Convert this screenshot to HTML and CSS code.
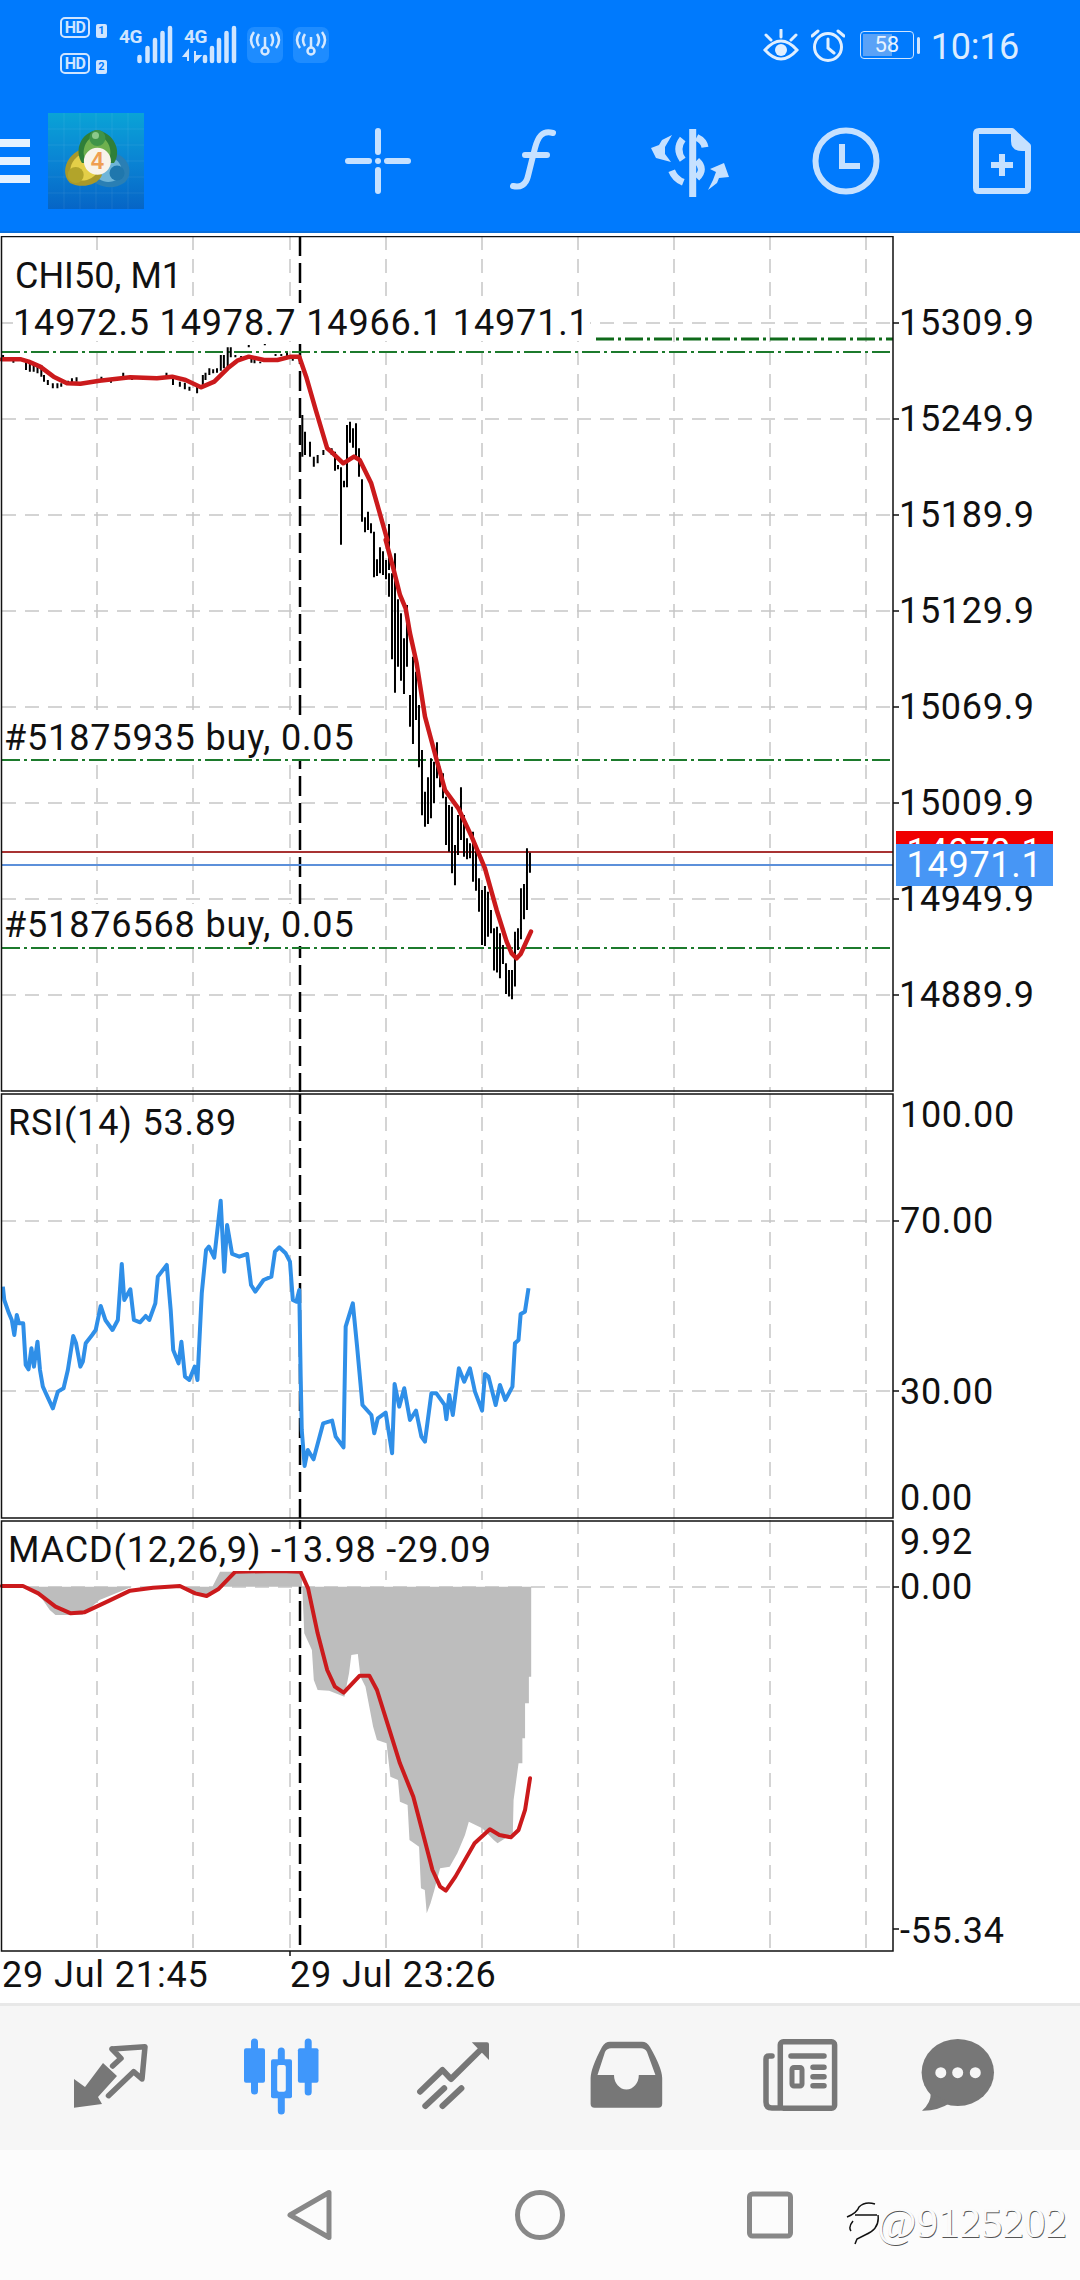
FILE: index.html
```html
<!DOCTYPE html>
<html lang="en">
<head>
<meta charset="utf-8">
<title>CHI50, M1</title>
<link rel="stylesheet" href="styles.css">
</head>
<body>
<header class="header">
  <div class="status">
    <div class="hd-col">
      <div class="hd-row"><span class="hd">HD</span><span class="sim">1</span></div>
      <div class="hd-row"><span class="hd">HD</span><span class="sim">2</span></div>
    </div>
    <svg class="signal" width="118" height="48" viewBox="119 21 118 48">
      <text class="net" x="119" y="43">4G</text>
      <text class="net" x="184" y="43">4G</text>
      <path class="sig-bars" d="M139.5 61V57M147.500 61V48M155 61V40M162.500 61V33M170 61V28M205 61V57M212 61V48M219 61V40M226.500 61V33M234 61V28"/>
      <path class="sig-arrows" d="M188 61V51l-4 5h4M195 51V61l5-5h-5"/>
    </svg>
    <svg class="hot" width="36" height="36" viewBox="0 0 36 36">
      <rect class="hot-bg" width="36" height="36" rx="7"/>
      <circle class="hot-line" cx="18" cy="24" r="3.500"/>
      <path class="hot-line" d="M18 20V10M12 7q-4 6 0 12M24 7q4 6 0 12M7 5q-6 8 0 16M29 5q6 8 0 16"/>
    </svg>
    <svg class="hot hot-2" width="36" height="36" viewBox="0 0 36 36">
      <rect class="hot-bg" width="36" height="36" rx="7"/>
      <circle class="hot-line" cx="18" cy="24" r="3.500"/>
      <path class="hot-line" d="M18 20V10M12 7q-4 6 0 12M24 7q4 6 0 12M7 5q-6 8 0 16M29 5q6 8 0 16"/>
    </svg>
    <div class="status-right">
      <svg width="36" height="33" viewBox="0 0 36 33">
        <path class="st-line" d="M2 21q16-18 32 0q-16 18-32 0z"/>
        <circle class="st-fill" cx="18" cy="21" r="6"/>
        <path class="st-line" d="M18 1v7M3 6l5 5M33 6l-5 5"/>
      </svg>
      <svg class="alarm" width="34" height="33" viewBox="0 0 34 33">
        <circle class="st-line" cx="17" cy="18" r="13.500"/>
        <path class="st-line" d="M17 10v9l6 5M1 7l6-5M33 7l-6-5"/>
      </svg>
      <div class="battery"><div class="batt-body"><span class="batt-fill"></span><span class="batt-num">58</span></div><span class="batt-tip"></span></div>
      <span class="clock">10:16</span>
    </div>
  </div>
  <div class="toolbar">
    <div class="burger"><span></span><span></span><span></span></div>
    <svg class="mt4" width="96" height="96" viewBox="0 0 96 96">
      <defs><linearGradient id="mt" x1="0" y1="0" x2="0" y2="1"><stop offset="0" stop-color="#0aa3d6"/><stop offset=".5" stop-color="#0a84d4"/><stop offset="1" stop-color="#0665c6"/></linearGradient></defs>
      <rect width="96" height="96" fill="url(#mt)"/>
      <path class="mt-grid" d="M16 0V96M32 0V96M48 0V96M64 0V96M80 0V96M0 16H96M0 32H96M0 48H96M0 64H96M0 80H96"/>
      <path d="M66 40C82 44 86 62 76 70C64 78 46 74 40 62Z" fill="#2a7fb4"/>
      <path d="M63 44C74 48 77 60 70 66C60 72 50 68 46 60Z" fill="#6fb5d8"/>
      <path d="M34 36C18 42 12 60 22 70C34 76 50 72 54 62Z" fill="#a8982a"/>
      <path d="M36 40C24 44 18 58 26 66C36 70 46 66 50 58Z" fill="#e4cf48"/>
      <path d="M49 17C32 20 26 38 34 50H66C74 38 66 20 49 17Z" fill="#2f7f38"/>
      <path d="M49 22C38 24 32 38 38 48H60C66 38 60 24 49 22Z" fill="#6fb04e"/>
      <circle cx="49.400" cy="25" r="8" fill="#3f9448"/>
      <circle cx="47.500" cy="22.500" r="3.500" fill="#8cc98a"/>
      <circle cx="27.700" cy="62" r="8" fill="#b2a42a"/>
      <circle cx="69" cy="60" r="7.500" fill="#1f77ad"/>
      <circle cx="49.400" cy="48.300" r="13.500" fill="#f8f3ea"/>
      <text class="mt-four" x="49.400" y="56">4</text>
    </svg>
    <svg class="tool tool-first" width="80" height="80" viewBox="0 0 80 80">
      <path class="tool-line round" d="M40 10V31M40 49V70M10 40H31M49 40H70"/>
      <circle class="tool-fill" cx="40" cy="40" r="3"/>
    </svg>
    <svg class="tool" width="80" height="80" viewBox="0 0 80 80">
      <path class="tool-line round" d="M59 12c-11-3-15 4-18 15l-7 28c-2 9-8 12-15 10M31 34H53"/>
    </svg>
    <svg class="tool" width="80" height="80" viewBox="0 0 80 80">
      <path class="tool-line heavy" d="M42.700 8V76M46.700 16.300Q54 19.700 55 26.300M32.700 18Q25 28 32.700 38.700M46.700 39.700Q56 48 46.700 57M21.700 49.700Q25 58 33.300 61.300"/>
      <path class="tool-fill" d="M22 14L12 19L9 24L1 27L6 37L21 41L15 33L15 26ZM58 69L67 62L69 57L79 56L74 42L60 48L66 51L63 59Z"/>
    </svg>
    <svg class="tool" width="80" height="80" viewBox="0 0 80 80">
      <circle class="tool-line" cx="40" cy="40" r="30.500"/>
      <path class="tool-line" d="M36 23V45H54"/>
    </svg>
    <svg class="tool" width="80" height="80" viewBox="0 0 80 80">
      <path class="tool-line join" d="M17 10H50L66 25V67Q66 70 63 70H17Q14 70 14 67V13Q14 10 17 10Z"/>
      <path class="tool-fill" d="M49 8L68 26V30H60Q49 30 49 20Z"/>
      <path class="tool-line" d="M40 33V55M29 44H51"/>
    </svg>
  </div>
</header>

<main class="chart">
  <section class="pane pane-main">
    <svg class="plot" width="1080" height="857" viewBox="0 236 1080 857">
      <path class="grid" d="M97 236V1092M193 236V1092M290 236V1092M386 236V1092M482 236V1092M578 236V1092M674 236V1092M770 236V1092M866 236V1092M2 323H893M2 419H893M2 515H893M2 611H893M2 707H893M2 803H893M2 899H893M2 995H893"/>
      <path class="vline" d="M300 236V1092"/>
      <path class="tick" d="M893 323H899M893 419H899M893 515H899M893 611H899M893 707H899M893 803H899M893 899H899M893 995H899"/>
      <path class="order" d="M2 352H893M2 760H893M2 948H893"/>
      <path class="order order-strong" d="M596 339H893"/>
      <path class="price-red" d="M2 852H893"/>
      <path class="price-blue" d="M2 865H893"/>
      <g class="bars" transform="translate(0 240) scale(.3827 .3333)">
        <path d="M8 345V362M35 358V368M68 365V390M78 372V395M88 375V395M98 375V400M108 375V410M115 405V425M125 420V435M138 430V445M150 430V445M160 430V440M178 422V435M188 415V430M200 412V425M265 410V425M290 415V428M322 398V420M345 408V420M410 408V420M435 398V415M452 415V435M470 425V440M483 428V448M495 440V452M515 438V460M530 405V440M537 398V420M547 385V405M557 388V400M567 385V398M577 345V392M585 345V385M595 322V385M603 322V352M615 345V352M630 348V358M650 315V322M657 355V368M665 360V370M680 365V370M692 312V316M720 342V348M735 342V348M750 338V350M765 345V362M790 525V650M797 575V645M810 605V650M820 650V680M830 645V670M845 630V645"/>
      </g>
      <g class="bars" transform="translate(330 410) scale(.3333)">
        <path d="M5 115V135M15 125V182M24 165V178M33 172V404M42 212V232M51 45V232M60 35V98M69 55V113M78 40V145M87 115V200M96 208V335M105 322V367M114 305V360M123 340V370M132 365V420M177 342V480"/>
      </g>
      <g class="bars" transform="translate(240 540) scale(.3333)">
        <path d="M402 0V112M411 58V108M420 22V100M429 34V105M438 60V118M447 100V170M456 100V358M465 40V458M474 178V380M483 220V422M492 295V462M501 195V380M510 465V560M519 350V612M528 395V540M537 495V682M546 630V826M555 755V860M564 712V852M573 655V835M582 665V790M591 607V715M600 680V742M609 700V775M618 770V915M627 795V935M636 800V1000M645 915V1036M654 825V945M663 742V900M672 825V950M681 895V958M690 910V955M699 875V1025M708 925V1052M717 1015V1115M726 1050V1215M735 1038V1218M744 1055V1190M753 1110V1180M762 1165V1292M771 1160V1298M780 1180V1315M789 1215V1272M798 1270V1362M807 1290V1370M816 1290V1378M825 1175V1340M834 1165V1230M843 1045V1198M852 1032V1138M861 925V1110M870 938V998"/>
      </g>
      <polyline class="ma" transform="translate(0 240) scale(.3827 .3333)" points="5,358 55,358 75,365 105,380 140,410 175,430 210,431 260,422 340,412 410,415 450,410 485,420 525,442 560,425 595,385 620,362 650,350 690,360 725,360 760,350 782,350 800,410 825,510 855,625 870,640 897,670 925,650 940,660 970,730 985,790 1012,900"/>
      <polyline class="ma" transform="translate(240 540) scale(.3333)" points="437,0 460,85 480,165 497,205 510,280 530,370 555,530 590,660 615,750 655,805 695,890 735,985 770,1110 800,1205 815,1240 830,1255 842,1242 850,1225 873,1175"/>
      <path class="frame" d="M1.500 236.500H893V1091H1.500Z"/>
    </svg>
    <div class="lbl lbl-symbol">CHI50, M1</div>
    <div class="lbl lbl-ohlc">14972.5 14978.7 14966.1 14971.1</div>
    <div class="lbl lbl-order1">#51875935 buy, 0.05</div>
    <div class="lbl lbl-order2">#51876568 buy, 0.05</div>
    <div class="axis-main">
      <span>15309.9</span><span>15249.9</span><span>15189.9</span><span>15129.9</span><span>15069.9</span><span>15009.9</span><span>14949.9</span><span>14889.9</span>
    </div>
    <div class="tag tag-red">14970.1</div>
    <div class="tag tag-blue">14971.1</div>
  </section>

  <section class="pane pane-rsi">
    <svg class="plot" width="1080" height="426" viewBox="0 1093 1080 426">
      <path class="grid" d="M97 1094V1518M193 1094V1518M290 1094V1518M386 1094V1518M482 1094V1518M578 1094V1518M674 1094V1518M770 1094V1518M866 1094V1518M2 1221H893M2 1391H893"/>
      <path class="vline" d="M300 1094V1518"/>
      <path class="tick" d="M893 1221H899M893 1391H899"/>
      <polyline class="rsi" transform="translate(0 1090) scale(.3571 .3333)" points="8,590 12,630 25,670 33,690 40,735 47,675 53,700 65,700 72,825 80,838 88,775 95,830 105,755 112,840 120,890 135,925 148,955 162,905 178,895 190,840 205,738 213,760 225,830 232,815 240,760 258,735 268,720 282,648 295,690 315,720 330,690 341,522 348,630 365,598 375,690 392,697 408,678 418,690 435,640 442,560 467,525 478,660 485,780 500,820 508,755 518,860 530,870 545,830 553,870 565,610 577,480 585,470 600,503 618,332 628,545 636,405 650,492 670,500 692,492 703,585 715,605 738,570 760,560 770,485 782,472 800,490 812,515 820,630 830,635 838,600 842,860 845,1020 853,1128 862,1080 878,1108 905,1000 930,992 940,1040 962,1072 968,710 988,640 1000,770 1015,945 1040,975 1048,1030 1058,985 1080,968 1098,1090 1105,882 1118,950 1132,895 1148,990 1165,962 1180,1040 1190,1055 1208,910 1222,910 1245,945 1250,988 1258,915 1268,975 1285,835 1300,875 1316,835 1330,905 1350,962 1358,852 1368,860 1388,945 1400,885 1415,930 1435,890 1442,760 1452,750 1458,672 1470,665 1480,595"/>
      <path class="frame" d="M1.500 1094H893V1518H1.500Z"/>
    </svg>
    <div class="lbl lbl-rsi">RSI(14) 53.89</div>
    <span class="axis ax-100">100.00</span>
    <span class="axis ax-70">70.00</span>
    <span class="axis ax-30">30.00</span>
    <span class="axis ax-0">0.00</span>
  </section>

  <section class="pane pane-macd">
    <svg class="plot" width="1080" height="438" viewBox="0 1520 1080 438">
      <path class="grid" d="M97 1520V1951M193 1520V1951M290 1520V1951M386 1520V1951M482 1520V1951M578 1520V1951M674 1520V1951M770 1520V1951M866 1520V1951M2 1587H893"/>
      <path class="vline" d="M300 1520V1951"/>
      <g transform="translate(0 1500) scale(.3827 .3333)">
        <path class="hist" d="M60 260L100 280L130 330L145 345L215 345L260 300L345 260ZM480 260L510 285L550 285L570 260ZM555 260L575 215L785 215L790 260ZM790 260L795 400L815 450L820 540L830 570L860 572L900 590L912 520L918 465L935 462L942 530L955 560L975 680L985 720L1010 730L1020 830L1040 840L1045 905L1065 915L1070 1020L1095 1040L1100 1165L1110 1170L1115 1240L1125 1210L1135 1170L1150 1105L1175 1100L1195 1060L1215 1005L1225 965L1260 985L1290 1020L1300 1030L1340 1000L1342 900L1355 790L1365 790L1365 715L1372 715L1372 610L1382 610L1382 530L1388 530L1388 260Z"/>
        <polyline class="signal-line" points="5,258 60,258 100,280 145,320 185,340 220,337 280,305 340,272 400,263 470,258 510,280 540,288 570,268 615,215 730,213 785,215 805,265 830,400 855,510 875,560 898,578 940,527 965,527 985,570 1015,680 1045,790 1080,890 1105,1000 1130,1110 1150,1160 1165,1172 1190,1130 1240,1030 1280,988 1305,1005 1335,1012 1355,990 1372,930 1385,835"/>
      </g>
      <path class="tick" d="M893 1587H899M893 1929H899M290 1951V1956"/>
      <path class="frame" d="M1.500 1521H893V1951H1.500Z"/>
    </svg>
    <div class="lbl lbl-macd">MACD(12,26,9) -13.98 -29.09</div>
    <span class="axis ax-992">9.92</span>
    <span class="axis ax-m0">0.00</span>
    <span class="axis ax-m55">-55.34</span>
    <div class="dates"><span class="date-a">29 Jul 21:45</span><span class="date-b">29 Jul 23:26</span></div>
  </section>
</main>

<nav class="tabs">
  <svg class="tab" width="80" height="80" viewBox="0 0 80 80">
    <path class="tab-fill" d="M4 67.700L4 39L15 47L33 23L47 36L28 57L32 64Z"/>
    <path class="tab-line" d="M42 9L75 6.700L72 39L63.600 31.700L38.500 55.700M42 9L51 18.300L42.600 26"/>
  </svg>
  <svg class="tab" width="80" height="80" viewBox="0 0 80 80">
    <path class="cand" d="M12.500 2V51M39.300 11V71M66.200 2V52"/>
    <rect class="cand-body" x="2" y="8.300" width="21" height="34.400" rx="2"/>
    <rect class="cand-body" x="29" y="19.300" width="21" height="39" rx="2"/>
    <rect class="cand-hole" x="35.200" y="25" width="8.600" height="26.700" rx="2"/>
    <rect class="cand-body" x="55.900" y="8.300" width="20.600" height="34.400" rx="2"/>
  </svg>
  <svg class="tab" width="80" height="80" viewBox="0 0 80 80">
    <path class="tab-line wide" d="M6.100 51.700L28.500 30L37 39L69.800 6.700M11.300 66L30.200 48.300M28.500 66L47.400 48.300"/>
    <path class="tab-fill" d="M57.800 2.300H73Q75 2.300 75 4.300V20Z"/>
  </svg>
  <svg class="tab" width="80" height="80" viewBox="0 0 80 80">
    <path class="tab-fill" fill-rule="evenodd" d="M24 1.700H56Q61 1.700 64 7Q76 28 76.200 38V63.700Q76.200 67.700 72.200 67.700H8.600Q4.600 67.700 4.600 63.700V38Q4.800 28 16 7Q19 1.700 24 1.700ZM25 8.300Q21 8.300 19 12L11.500 35H28A12.400 14.500 0 0 0 52.800 35H69.400L61 12Q59 8.300 55 8.300Z"/>
  </svg>
  <svg class="tab" width="80" height="80" viewBox="0 0 80 80">
    <rect class="tab-line" x="22.300" y="1.700" width="54.300" height="66.500" rx="3"/>
    <path class="tab-line" d="M14 16H11Q8 16 8 19V62Q8 68 14 68H22"/>
    <path class="tab-line" d="M33 16H66M55 27.300H66M55 36.700H66M55 45.700H66"/>
    <rect class="tab-line thin" x="34" y="27.500" width="10" height="18.500" rx="2"/>
  </svg>
  <svg class="tab tab-chat" width="80" height="80" viewBox="0 0 80 80">
    <ellipse class="tab-fill" cx="39.800" cy="32.500" rx="36.200" ry="33.500"/>
    <path class="tab-fill" d="M12.800 53Q13 63 4 70.700Q20 71 32 63Z"/>
    <circle class="dot" cx="22.800" cy="32.700" r="5.500"/>
    <circle class="dot" cx="39.700" cy="32.700" r="5.500"/>
    <circle class="dot" cx="57.300" cy="32.700" r="5.500"/>
  </svg>
</nav>

<footer class="sysnav">
  <svg width="60" height="60" viewBox="0 0 60 60"><path class="nav-line" d="M10 30L49 7.500V52.500Z"/></svg>
  <svg width="60" height="60" viewBox="0 0 60 60"><circle class="nav-line" cx="30" cy="30" r="22.500"/></svg>
  <svg width="60" height="60" viewBox="0 0 60 60"><rect class="nav-line" x="9.500" y="9" width="41" height="42" rx="3"/></svg>
  <div class="mark">
    <svg class="mark-icon" width="36" height="44" viewBox="0 0 36 44">
      <path class="mark-line" d="M2 16Q12 12 14 6Q20 0 30 3M10 14H32M8 20Q3 26 6 30M33 14Q35 28 20 34L12 38L10 43"/>
    </svg>
    <span>@9125202</span>
  </div>
</footer>
</body>
</html>
```
FILE: styles.css
```css
* { box-sizing: border-box; }
html, body { margin: 0; padding: 0; }
body { width: 1080px; height: 2280px; overflow: hidden; background: #fff; font-family: Roboto, "Liberation Sans", sans-serif; color: #111; }
svg { display: block; }

.header { height: 233px; background: #007afd; border-bottom: 2px solid #0a6fdc; margin-bottom: 3px; color: #d4e9ff; }

.status { height: 90px; display: flex; align-items: center; padding-left: 60px; padding-right: 61px; }
.hd-col { display: flex; flex-direction: column; gap: 15px; width: 59px; }
.hd-row { display: flex; align-items: flex-end; gap: 6px; }
.hd { display: flex; align-items: center; justify-content: center; width: 30px; height: 21px; border: 2px solid #cfe5ff; border-radius: 5px; font-size: 16px; line-height: 17px; font-weight: 700; letter-spacing: -.5px; color: #cfe5ff; }
.sim { display: flex; align-items: center; justify-content: center; width: 11px; height: 14px; background: #cfe5ff; border-radius: 2px; color: #007afd; font-size: 11px; line-height: 14px; font-weight: 700; }
.signal { margin-right: 10px; }
.net { font-family: Roboto, sans-serif; font-size: 19px; font-weight: 700; fill: #cfe5ff; letter-spacing: -.5px; }
.sig-bars { stroke: #cfe5ff; stroke-width: 4.500; stroke-linecap: round; fill: none; }
.sig-arrows { stroke: #cfe5ff; stroke-width: 2; fill: #cfe5ff; }
.hot-bg { fill: #1e8cff; }
.hot-line { stroke: #d6e9ff; stroke-width: 2.500; fill: none; }
.hot-2 { margin-left: 10px; }
.status-right { margin-left: auto; display: flex; align-items: center; }
.st-line { stroke: #e0efff; stroke-width: 3; fill: none; stroke-linecap: round; }
.st-fill { fill: #e0efff; }
.alarm { margin-left: 12px; }
.battery { display: flex; align-items: center; margin-left: 15px; gap: 3px; }
.batt-body { position: relative; width: 54px; height: 28px; border: 1.500px solid #cfe5ff; border-radius: 4px; }
.batt-fill { position: absolute; left: 2px; top: 2px; bottom: 2px; width: 29px; background: #5aa2f7; }
.batt-num { position: relative; display: block; text-align: center; font-size: 22px; line-height: 25px; color: #e8f3ff; }
.batt-tip { width: 3px; height: 17px; background: #cfe5ff; border-radius: 2px; }
.clock { margin-left: 11px; margin-top: 4px; font-size: 36px; line-height: 40px; color: #dcecff; letter-spacing: -.3px; }

.toolbar { height: 141px; display: flex; align-items: center; }
.burger { width: 30px; display: flex; flex-direction: column; gap: 10px; margin-right: 18px; }
.burger span { height: 8px; background: #e6f2ff; }
.mt-grid { stroke: rgba(255, 255, 255, .07); stroke-width: 1; fill: none; }
.mt-four { font-family: "Liberation Sans", sans-serif; font-weight: 700; font-size: 23px; fill: #ef9f52; text-anchor: middle; }
.tool { margin-left: 76px; }
.tool-first { margin-left: 194px; }
.tool-line { stroke: #c6e1ff; stroke-width: 6; fill: none; }
.tool-line.round { stroke-linecap: round; }
.tool-line.heavy { stroke-width: 7; }
.tool-line.join { stroke-linejoin: round; }
.tool-fill { fill: #c6e1ff; }

.chart { height: 1767px; }
.pane { position: relative; }
.pane-main { height: 857px; }
.pane-rsi { height: 427px; }
.pane-macd { height: 483px; }
.plot { position: absolute; left: 0; top: 0; }

.grid { stroke: #c6c6c6; stroke-width: 1.500; stroke-dasharray: 14 9; fill: none; }
.vline { stroke: #000; stroke-width: 2.500; stroke-dasharray: 20 7; fill: none; }
.tick { stroke: #111; stroke-width: 1.500; fill: none; }
.order { stroke: #1c7a2c; stroke-width: 2; stroke-dasharray: 18 4 3 4; fill: none; }
.order-strong { stroke: #0f6a1a; stroke-width: 3; }
.price-red { stroke: #a83232; stroke-width: 2; fill: none; }
.price-blue { stroke: #5c90da; stroke-width: 2; fill: none; }
.bars path { stroke: #000; stroke-width: 2; fill: none; vector-effect: non-scaling-stroke; }
.ma { stroke: #cb1a1c; stroke-width: 4.500; fill: none; stroke-linejoin: round; stroke-linecap: round; vector-effect: non-scaling-stroke; }
.rsi { stroke: #2f8fe8; stroke-width: 4; fill: none; stroke-linejoin: round; vector-effect: non-scaling-stroke; }
.hist { fill: #bdbdbd; }
.signal-line { stroke: #cb1a1c; stroke-width: 4; fill: none; stroke-linejoin: round; stroke-linecap: round; vector-effect: non-scaling-stroke; }
.frame { stroke: #111; stroke-width: 1.500; fill: none; }

.lbl { position: absolute; font-size: 36px; line-height: 42px; background: #fff; white-space: nowrap; color: #111; letter-spacing: .85px; }
.lbl-symbol { left: 15px; top: 19px; padding-right: 2px; letter-spacing: 0; }
.lbl-ohlc { left: 13px; top: 67px; height: 38px; line-height: 40px; }
.lbl-order1 { left: 4px; top: 481px; }
.lbl-order2 { left: 4px; top: 668px; }
.lbl-rsi { left: 8px; top: 9px; }
.lbl-macd { left: 8px; top: 9px; }

.axis-main { position: absolute; left: 899px; top: 39px; display: flex; flex-direction: column; letter-spacing: .7px; }
.axis-main span { display: block; height: 96px; line-height: 96px; font-size: 36px; }
.axis { position: absolute; left: 900px; font-size: 36px; line-height: 42px; letter-spacing: .7px; }
.ax-100 { top: 1px; }
.ax-70 { top: 107px; }
.ax-30 { top: 278px; }
.ax-0 { top: 384px; }
.ax-992 { top: 1px; }
.ax-m0 { top: 46px; }
.ax-m55 { top: 390px; }
.tag { position: absolute; left: 896px; width: 157px; height: 42px; font-size: 36px; line-height: 42px; color: #fff; text-align: center; letter-spacing: .7px; }
.tag-red { top: 595px; background: #f00000; }
.tag-blue { top: 608px; background: #4796f5; }

.dates { position: absolute; left: 0; top: 434px; width: 893px; height: 42px; }
.dates span { position: absolute; top: 0; font-size: 36px; line-height: 42px; letter-spacing: .85px; }
.date-a { left: 2px; }
.date-b { left: 290px; }

.tabs { height: 147px; background: #f6f6f6; border-top: 3px solid #e8e8e8; display: flex; gap: 92px; padding: 34px 0 0 70px; }
.tab { overflow: visible; }
.tab-chat { margin-left: -12px; }
.tab-fill { fill: #777; }
.tab-line { stroke: #777; stroke-width: 5.500; fill: none; stroke-linecap: round; stroke-linejoin: round; }
.tab-line.wide { stroke-width: 6; }
.tab-line.thin { stroke-width: 5; }
.cand { stroke: #3f97fb; stroke-width: 7; stroke-linecap: round; fill: none; }
.cand-body { fill: #3f97fb; }
.cand-hole { fill: #f6f6f6; }
.dot { fill: #f6f6f6; }

.sysnav { height: 130px; background: #fcfcfc; display: flex; align-items: center; padding-left: 280px; gap: 170px; }
.nav-line { stroke: #888; stroke-width: 5; fill: none; stroke-linejoin: round; }
.mark { display: flex; align-items: center; margin-left: -125px; margin-top: 16px; }
.mark span { margin-left: -4px; font-family: "Liberation Serif", serif; font-size: 43px; font-weight: 400; color: #fbfbfb; text-shadow: .6px .5px 0 #555; line-height: 46px; }
.mark-line { stroke: #111; stroke-width: 1.500; fill: none; }
```
